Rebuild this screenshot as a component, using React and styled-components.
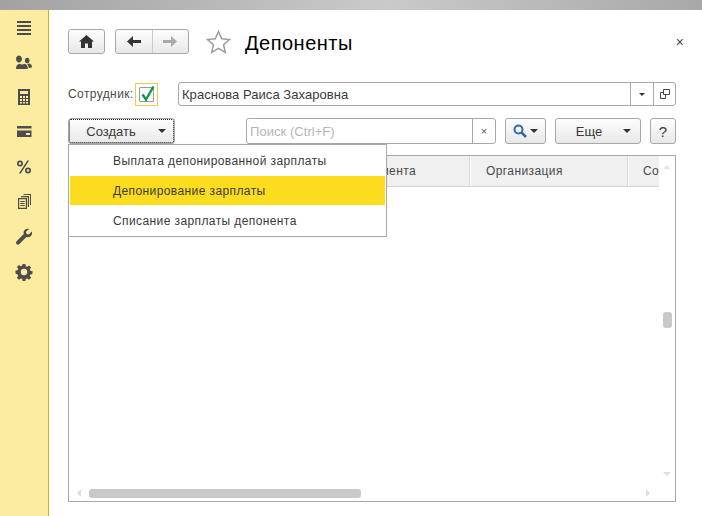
import React from "react";
import styled, { createGlobalStyle } from "styled-components";

const Global = createGlobalStyle`
  html, body { margin: 0; padding: 0; background: #fff; }
  body { font-family: "Liberation Sans", Arial, sans-serif; color: #333; overflow: hidden; }
  #root { width: 702px; height: 516px; }
`;

const Page = styled.div`
  width: 702px;
  height: 516px;
  display: flex;
  flex-direction: column;
  overflow: hidden;
`;
const TopStrip = styled.div`
  height: 10px;
  flex: none;
  background: linear-gradient(90deg, #a2a2a2 0%, #cacaca 55%, #a8a8a8 100%);
`;
const Body = styled.div`
  flex: 1;
  display: flex;
  min-height: 0;
`;
const Sidebar = styled.nav`
  width: 48px;
  flex: none;
  border-right: 1px solid #cfae20;
  background: #fbeca0;
  display: flex;
  flex-direction: column;
  align-items: center;
  padding-top: 8px;
  gap: 17px;
`;
const NavIcon = styled.svg`
  width: 18px;
  height: 18px;
  display: block;
  fill: #4d4d4d;
  flex: none;
`;
const Main = styled.main`
  flex: 1;
  min-width: 0;
  padding: 19px 26px 14px 19px;
  display: flex;
  flex-direction: column;
  position: relative;
`;
const Header = styled.div`
  display: flex;
  align-items: center;
  height: 25px;
`;
const Btn = styled.button`
  box-sizing: border-box;
  height: ${p => p.$h || 25}px;
  width: ${p => p.$w}px;
  margin-left: ${p => p.$ml || 0}px;
  flex: none;
  padding: 0 0 0 ${p => p.$pl || 0}px;
  gap: ${p => p.$gap || 0}px;
  border: 1px solid #a8a8a8;
  border-radius: 3px;
  background: linear-gradient(#fdfdfd, #e8e8e8);
  display: flex;
  align-items: center;
  justify-content: center;
  font: ${p => p.$fs || 13}px "Liberation Sans", Arial, sans-serif;
  letter-spacing: 0;
  color: #3a3a3a;
`;
const NavGroup = styled.div`
  box-sizing: border-box;
  width: 74px;
  height: 25px;
  margin-left: 10px;
  border: 1px solid #a8a8a8;
  border-radius: 3px;
  background: linear-gradient(#fdfdfd, #e8e8e8);
  display: flex;
`;
const NavPart = styled.div`
  flex: 1;
  display: flex;
  align-items: center;
  justify-content: center;
  & + & { border-left: 1px solid #c9c9c9; }
`;
const Glyph = styled.svg`
  display: block;
  flex: none;
`;
const Star = styled(Glyph)`
  margin-left: 17px;
`;
const Title = styled.h1`
  margin: 3px 0 0 14px;
  font-size: 20px;
  line-height: 24px;
  font-weight: 400;
  letter-spacing: 0.5px;
  color: #000;
`;
const Close = styled.span`
  margin-left: auto;
  margin-right: -8px;
  font-size: 14px;
  color: #444;
  line-height: 1;
`;
const EmployeeRow = styled.div`
  display: flex;
  align-items: center;
  height: 24px;
  margin-top: 28px;
  font-size: 12px;
`;
const Label = styled.label`
  width: 66px;
  flex: none;
  font-size: 12px;
  letter-spacing: 0.4px;
  color: #4a4a4a;
  white-space: nowrap;
`;
const CheckWrap = styled.span`
  box-sizing: border-box;
  width: 23px;
  height: 23px;
  margin-left: 1px;
  border: 1px solid #f2c94c;
  display: flex;
  align-items: center;
  justify-content: center;
  flex: none;
`;
const CheckBox = styled.span`
  box-sizing: border-box;
  width: 15px;
  height: 15px;
  border: 1px solid #9a9a9a;
  border-radius: 1px;
  position: relative;
  display: block;
  background: #fafafa;
`;
const CheckMark = styled.svg`
  position: absolute;
  left: 0;
  top: -3px;
  width: 16px;
  height: 17px;
`;
const Field = styled.div`
  box-sizing: border-box;
  height: ${p => p.$h || 24}px;
  margin-left: ${p => p.$ml || 0}px;
  width: ${p => p.$w}px;
  border: 1px solid #a8a8a8;
  border-radius: 3px;
  background: #fff;
  display: flex;
  align-items: stretch;
  flex: none;
`;
const FieldText = styled.div`
  flex: 1;
  padding-left: 3px;
  display: flex;
  align-items: center;
  font-size: 13px;
  letter-spacing: 0.05px;
  color: ${p => (p.$muted ? "#b5b5b5" : "#3a3a3a")};
`;
const FieldCell = styled.div`
  width: ${p => p.$w}px;
  border-left: 1px solid #a8a8a8;
  display: flex;
  align-items: center;
  justify-content: center;
  flex: none;
  color: #555;
  font-size: 11px;
`;
const ToolRow = styled.div`
  display: flex;
  align-items: center;
  margin-top: 12px;
  height: 26px;
`;
const CreateBtn = styled(Btn)`
  outline: 1px dotted #222;
  outline-offset: -2px;
`;
const Caret = styled.span`
  width: 0;
  height: 0;
  border-left: ${p => p.$s || 4}px solid transparent;
  border-right: ${p => p.$s || 4}px solid transparent;
  border-top: ${p => p.$s || 4}px solid #333;
  margin-left: ${p => p.$ml || 0}px;
  display: block;
  flex: none;
`;
const Table = styled.section`
  box-sizing: border-box;
  flex: 1;
  margin-top: 11px;
  border: 1px solid #a8a8a8;
  position: relative;
  min-height: 0;
  overflow: hidden;
`;
const HeaderRow = styled.div`
  width: 590px;
  height: 31px;
  box-sizing: border-box;
  background: #f0f0f0;
  border-bottom: 1px solid #d4d4d4;
  display: flex;
  overflow: hidden;
`;
const Col = styled.div`
  box-sizing: border-box;
  width: ${p => p.$w}px;
  flex: none;
  padding-left: ${p => p.$pl || 0}px;
  display: flex;
  align-items: center;
  justify-content: ${p => (p.$end ? "flex-end" : "flex-start")};
  padding-right: ${p => (p.$end ? 53 : 0)}px;
  border-right: ${p => (p.$last ? "0" : "1px solid #d8d8d8")};
  box-shadow: ${p => (p.$last ? "none" : "1px 0 0 #fff")};
  font-size: 12px;
  letter-spacing: 0.4px;
  color: #4a4a4a;
  white-space: nowrap;
`;
const HScroll = styled.div`
  position: absolute;
  left: 20px;
  bottom: 3px;
  width: 272px;
  height: 9px;
  border-radius: 3px;
  background: #c9c9c9;
`;
const VScroll = styled.div`
  position: absolute;
  right: 3px;
  top: 156px;
  width: 9px;
  height: 16px;
  border-radius: 3px;
  background: #c9c9c9;
`;
const Arrow = styled.span`
  position: absolute;
  width: 0;
  height: 0;
  ${p => p.$pos}
`;
const Menu = styled.ul`
  position: absolute;
  left: 19px;
  top: 134px;
  box-sizing: border-box;
  width: 319px;
  height: 93px;
  margin: 0;
  padding: 1px;
  list-style: none;
  background: #fff;
  border: 1px solid #a8a8a8;
  box-shadow: 0 0 1px rgba(0,0,0,.1);
  z-index: 2;
`;
const MenuItem = styled.li`
  height: ${p => p.$h}px;
  box-sizing: border-box;
  padding-left: 43px;
  display: flex;
  align-items: center;
  font-size: 12px;
  letter-spacing: 0.4px;
  color: #3a3a3a;
  background: ${p => (p.$active ? "#fcdc1e" : "transparent")};
`;

const Icon = ({ children }) => <NavIcon viewBox="0 0 18 18">{children}</NavIcon>;

export default function App() {
  return (
    <Page>
      <Global />
      <TopStrip />
      <Body>
        <Sidebar>
          <Icon><path d="M2 3h14v2H2zM2 7h14v2H2zM2 11h14v2H2zM2 15h14v2H2z" /></Icon>
          <Icon>
            <path d="M7 6a3 3.4 0 1 1 0-.1zM1 16c0-3 1-4.6 3.4-5.2 1.6 1 3.6 1 5.2 0C12 11.4 12.8 13 12.8 16z" />
            <path d="M14.5 7.5a2.3 2.7 0 1 1-4.6 0 2.3 2.7 0 0 1 4.6 0zM13.6 15c0-2-.6-3.4-1.8-4.2 1 .2 1.8.2 2.6-.2 1.8.4 2.6 2 2.6 3.8z" />
          </Icon>
          <Icon><path fillRule="evenodd" d="M3 1h12v16H3zM5 3v3h8V3zM5 8v2h2V8zm3 0v2h2V8zm3 0v2h2V8zM5 11v2h2v-2zm3 0v2h2v-2zm3 0v2h2v-2zM5 14v1.500h2V14zm3 0v1.500h2V14zm3 0v1.500h2V14z" /></Icon>
          <Icon><path fillRule="evenodd" d="M2 3h14.500v11H2zM2 5.500v2h14.500v-2zM11 10v2h4v-2z" /></Icon>
          <Icon>
            <path fillRule="evenodd" d="M5 2.500a3 3 0 1 1 0 6 3 3 0 0 1 0-6zm0 1.700a1.300 1.300 0 1 0 0 2.600 1.300 1.300 0 0 0 0-2.600zM13 9.500a3 3 0 1 1 0 6 3 3 0 0 1 0-6zm0 1.700a1.300 1.300 0 1 0 0 2.600 1.300 1.300 0 0 0 0-2.600z" />
            <path d="M12.300 2.500h1.800L5.700 15.500H3.900z" />
          </Icon>
          <Icon>
            <path fillRule="evenodd" d="M3 5h9v11H3zM4.200 6.200v8.600h6.600V6.200zM5.300 8h4.400v1H5.300zm0 2h4.400v1H5.300zm0 2h4.400v1H5.300z" />
            <path d="M6 3h8v11h-1.200V4.200H6zM8.500 1H16v11h-1V2H8.500z" />
          </Icon>
          <Icon><path d="M16.800 3.500l-3 3-2.200-.6-.6-2.200 3-2.800c-2.400-.8-5 .6-5.400 3-.1.800 0 1.600.2 2.200L1.600 13.200c-.8.800-.8 2.100 0 2.900.8.800 2 .8 2.800 0l7-7c2.600.8 5.200-.8 5.600-3.300.1-.8 0-1.600-.2-2.300z" /></Icon>
          <Icon><path fillRule="evenodd" d="M7.600 1h2.800l.4 2.200 1.400.6 1.900-1.300 2 2-1.300 1.900.6 1.400 2.100.4v2.800l-2.100.4-.6 1.400 1.300 1.900-2 2-1.900-1.300-1.400.6-.4 2.100H7.600l-.4-2.100-1.400-.6-1.900 1.300-2-2 1.300-1.900-.6-1.400L.5 10.400V7.600l2.100-.4.6-1.400-1.300-1.900 2-2 1.900 1.300 1.400-.6zM9 5.800a3.200 3.200 0 1 0 0 6.400 3.200 3.200 0 0 0 0-6.400z" /></Icon>
        </Sidebar>
        <Main>
          <Header>
            <Btn $w={37}>
              <Glyph width="15" height="13" viewBox="0 0 15 13"><path fill="#333" d="M7.500 0L0 6.500h2V13h4V8.500h3V13h4V6.500h2z" /></Glyph>
            </Btn>
            <NavGroup>
              <NavPart>
                <Glyph width="14" height="11" viewBox="0 0 14 11"><path fill="#333" d="M6 0L0 5.500 6 11V7h8V4H6z" /></Glyph>
              </NavPart>
              <NavPart>
                <Glyph width="14" height="11" viewBox="0 0 14 11"><path fill="#aaa" d="M8 0l6 5.500L8 11V7H0V4h8z" /></Glyph>
              </NavPart>
            </NavGroup>
            <Star width="25" height="24" viewBox="0 0 25 24">
              <path fill="#fff" stroke="#9c9c9c" strokeWidth="1.500" d="M12.500 1.500l3.200 7.200 7.800.8-5.900 5.200 1.700 7.700-6.800-4-6.800 4 1.700-7.700L1.500 9.500l7.800-.8z" />
            </Star>
            <Title>Депоненты</Title>
            <Close>×</Close>
          </Header>
          <EmployeeRow>
            <Label>Сотрудник:</Label>
            <CheckWrap>
              <CheckBox>
                <CheckMark viewBox="0 0 16 17"><path fill="none" stroke="#0b9b4b" strokeWidth="2.400" d="M2.500 9.500l3.500 5L13.500 1.500" /></CheckMark>
              </CheckBox>
            </CheckWrap>
            <Field $ml={20} $w={498}>
              <FieldText>Краснова Раиса Захаровна</FieldText>
              <FieldCell $w={22}><Caret $s={3} /></FieldCell>
              <FieldCell $w={21}>
                <Glyph width="10" height="10" viewBox="0 0 10 10">
                  <path fill="none" stroke="#444" d="M3.500 5.500V.5h6v5h-6zM3.500 3.500H.5v6h5V6" />
                </Glyph>
              </FieldCell>
            </Field>
          </EmployeeRow>
          <ToolRow>
            <CreateBtn $w={107} $h={26} $pl={9} $gap={22}>Создать<Caret /></CreateBtn>
            <Field $ml={71} $w={250} $h={26}>
              <FieldText $muted>Поиск (Ctrl+F)</FieldText>
              <FieldCell $w={22}>×</FieldCell>
            </Field>
            <Btn $ml={9} $w={41} $h={26}>
              <Glyph width="14" height="14" viewBox="0 0 14 14">
                <circle cx="5.500" cy="5.500" r="4" fill="none" stroke="#2d6da3" strokeWidth="2" />
                <path stroke="#2d6da3" strokeWidth="2.500" d="M8.500 8.500l4.500 4.500" />
              </Glyph>
              <Caret $ml={3} />
            </Btn>
            <Btn $ml={9} $w={86} $h={26} $pl={11} $gap={21}>Еще<Caret /></Btn>
            <Btn $ml={9} $w={26} $h={26} $fs={15}>?</Btn>
          </ToolRow>
          <Table>
            <HeaderRow>
              <Col $w={401} $end>мента</Col>
              <Col $w={158} $pl={16}>Организация</Col>
              <Col $w={31} $pl={15} $last>Со</Col>
            </HeaderRow>
            <Arrow $pos="right:4px;top:9px;border-left:4px solid transparent;border-right:4px solid transparent;border-bottom:4px solid #e6e6e6;" />
            <VScroll />
            <Arrow $pos="right:4px;bottom:25px;border-left:4px solid transparent;border-right:4px solid transparent;border-top:4px solid #dedede;" />
            <Arrow $pos="left:8px;bottom:4px;border-top:4px solid transparent;border-bottom:4px solid transparent;border-right:4px solid #dedede;" />
            <HScroll />
            <Arrow $pos="right:25px;bottom:4px;border-top:4px solid transparent;border-bottom:4px solid transparent;border-left:4px solid #dedede;" />
          </Table>
          <Menu>
            <MenuItem $h={30}>Выплата депонированной зарплаты</MenuItem>
            <MenuItem $h={29} $active>Депонирование зарплаты</MenuItem>
            <MenuItem $h={31}>Списание зарплаты депонента</MenuItem>
          </Menu>
        </Main>
      </Body>
    </Page>
  );
}
